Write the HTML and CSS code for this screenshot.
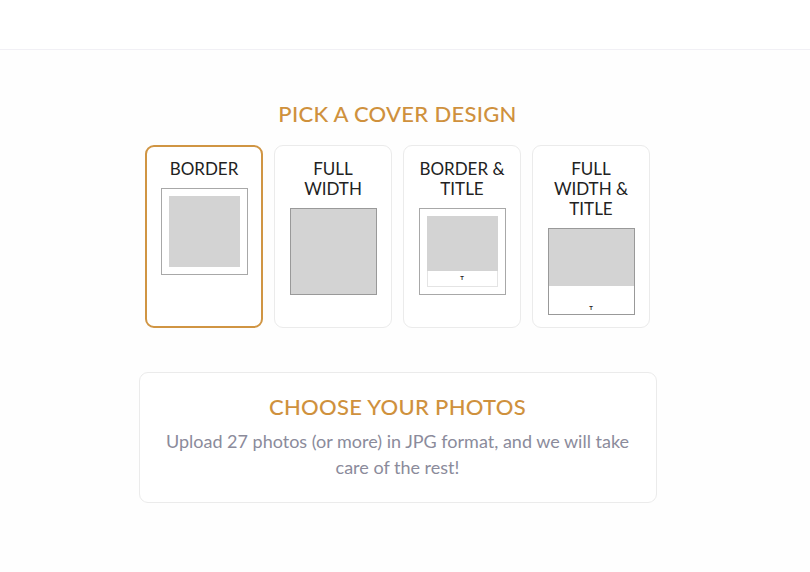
FILE: index.html
```html
<!DOCTYPE html>
<html lang="en">
<head>
  <meta charset="UTF-8">
  <meta name="viewport" content="width=device-width, initial-scale=1.0">
  <title>Pick a cover design</title>
  <link rel="stylesheet" href="styles.css">
</head>
<body>
  <header class="topbar"></header>

  <main class="page">
    <section class="covers">
      <h1 class="heading">PICK A COVER DESIGN</h1>
      <div class="cover-list">
        <div class="cover selected">
          <div class="cover-label">BORDER</div>
          <div class="thumb thumb-border">
            <div class="photo"></div>
          </div>
        </div>
        <div class="cover">
          <div class="cover-label">FULL<br>WIDTH</div>
          <div class="thumb thumb-full"></div>
        </div>
        <div class="cover">
          <div class="cover-label">BORDER &amp;<br>TITLE</div>
          <div class="thumb thumb-border">
            <div class="photo photo-short"></div>
            <div class="title-strip">T</div>
          </div>
        </div>
        <div class="cover">
          <div class="cover-label">FULL<br>WIDTH &amp;<br>TITLE</div>
          <div class="thumb thumb-fulltitle">
            <div class="photo-top"></div>
            <div class="title-bottom">T</div>
          </div>
        </div>
      </div>
    </section>

    <section class="card photos">
      <h2 class="heading">CHOOSE YOUR PHOTOS</h2>
      <p class="hint">Upload 27 photos (or more) in JPG format, and we will take care of the rest!</p>
    </section>
  </main>
</body>
</html>
```

FILE: styles.css
```css
body {
  margin: 0;
  background: #fefefe;
  font-family: Lato, 'Noto Sans', sans-serif;
  color: #222;
}
.topbar {
  height: 49px;
  background: #fff;
  border-bottom: 1px solid #f1f0f5;
}
.page {
  width: 795px;
  display: flex;
  flex-direction: column;
  align-items: center;
  padding-top: 49px;
}
.heading {
  margin: 0;
  color: #cf913d;
  font-size: 22px;
  font-weight: 500;
  line-height: 30px;
  letter-spacing: 0.3px;
  text-align: center;
}
.cover-list {
  display: flex;
  gap: 11px;
  margin-top: 16px;
}
.cover {
  width: 118px;
  height: 183px;
  box-sizing: border-box;
  background: #fff;
  border: 1px solid #ebebeb;
  border-radius: 9px;
  padding-top: 13px;
  display: flex;
  flex-direction: column;
  align-items: center;
}
.cover.selected {
  border: 2px solid #d09543;
  padding-top: 12px;
}
.cover-label {
  font-size: 17px;
  line-height: 20px;
  text-align: center;
  margin-bottom: 9px;
}
.thumb {
  width: 87px;
  height: 87px;
  box-sizing: border-box;
  border: 1px solid #a8a8a8;
}
.thumb-border {
  padding: 7px;
  display: flex;
  flex-direction: column;
}
.photo {
  flex: 1;
  background: #d3d3d3;
}
.photo-short {
  flex: none;
  height: 55px;
}
.title-strip,
.title-bottom {
  font-size: 6px;
  font-weight: 700;
  text-align: center;
  color: #222;
}
.title-strip {
  flex: 1;
  border: 1px solid #e4e4e4;
  border-top: none;
  line-height: 13px;
}
.thumb-full {
  background: #d3d3d3;
  border-color: #999;
}
.thumb-fulltitle {
  display: flex;
  flex-direction: column;
  border-color: #999;
}
.photo-top {
  height: 57px;
  background: #d3d3d3;
}
.title-bottom {
  flex: 1;
  display: flex;
  align-items: flex-end;
  justify-content: center;
  padding-bottom: 3px;
}
.card {
  width: 518px;
  box-sizing: border-box;
  background: #fff;
  border: 1px solid #ebebeb;
  border-radius: 9px;
}
.photos {
  margin-top: 44px;
  padding: 19px 20px 22px;
}
.hint {
  margin: 6px 0 0;
  color: #8b8b9b;
  font-size: 18px;
  line-height: 26px;
  text-align: center;
}
```
